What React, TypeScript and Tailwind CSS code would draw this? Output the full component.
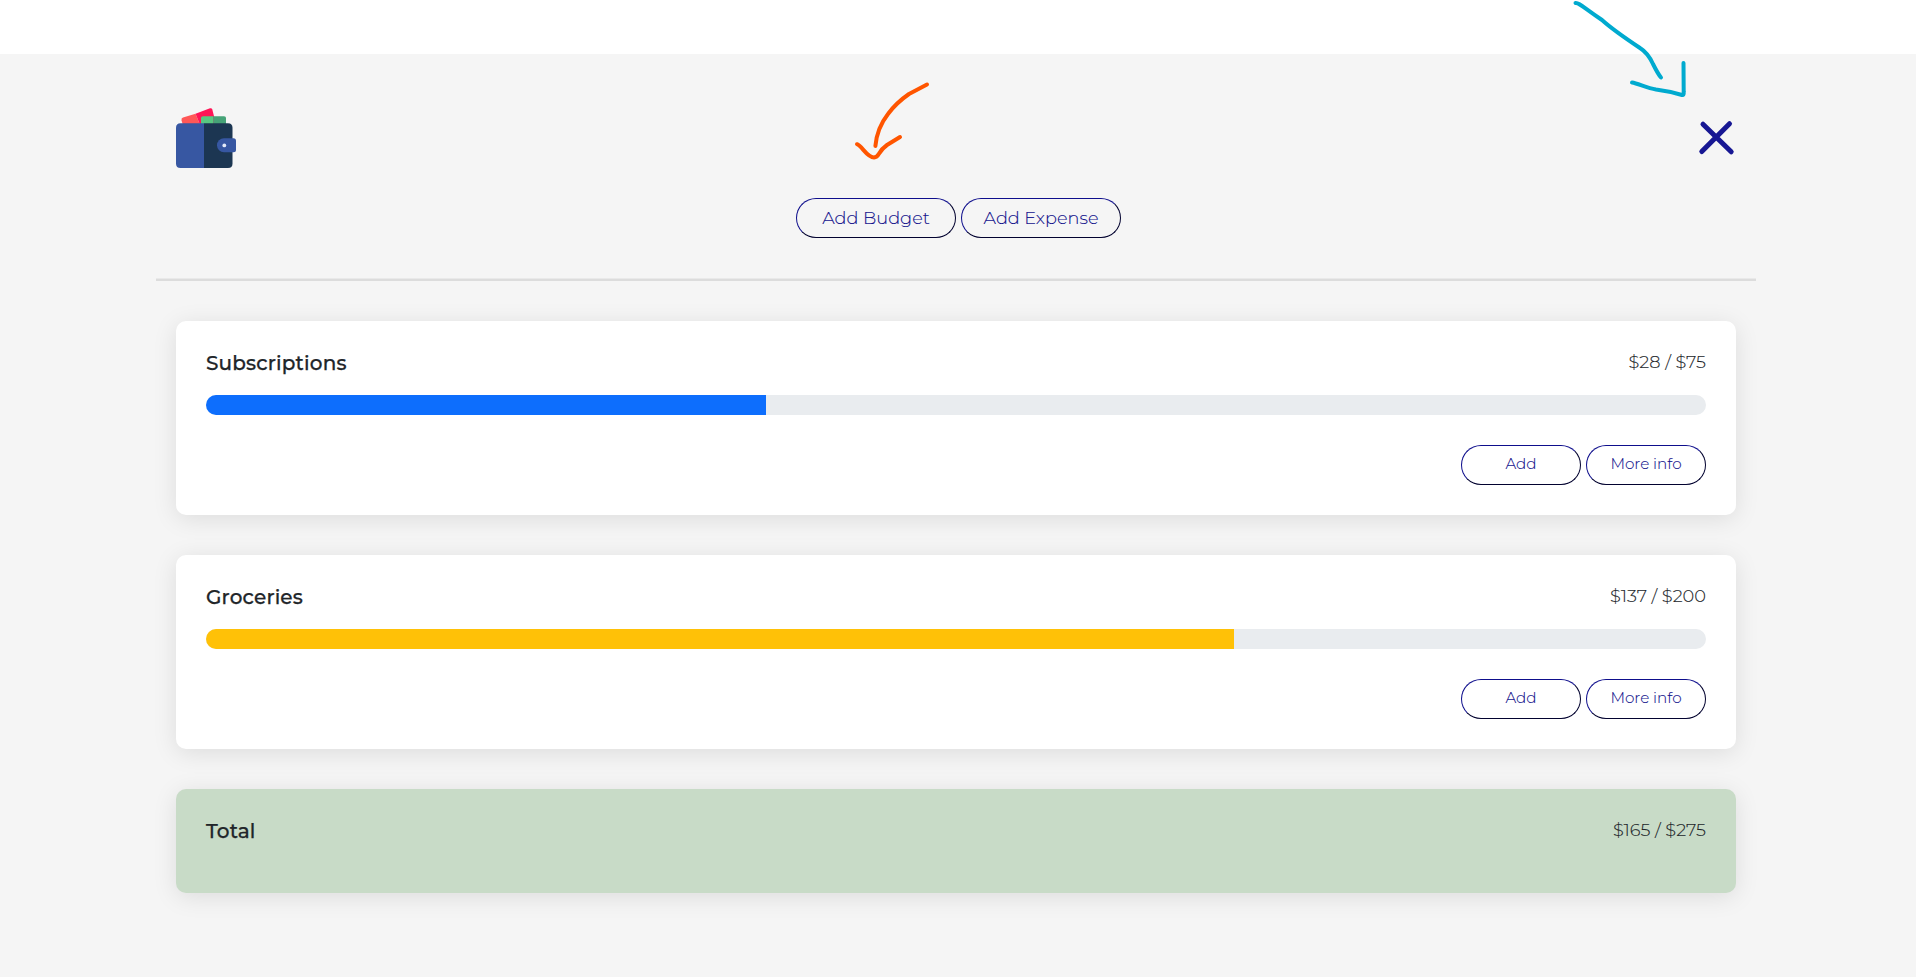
import type { ReactNode } from "react";

type Budget = { name: string; amount: string; percent: number; bar: string };

const budgets: Budget[] = [
  { name: "Subscriptions", amount: "$28 / $75", percent: 37.333, bar: "bg-[#0d6efd]" },
  { name: "Groceries", amount: "$137 / $200", percent: 68.5, bar: "bg-[#ffc107]" },
];

const cardShadow = "shadow-[0_4px_25px_rgba(0,0,0,0.1)]";

function PillButton({ children, className }: { children: ReactNode; className: string }) {
  return (
    <button
      className={`flex h-10 items-center justify-center rounded-[20px] border border-t-[#0e0e8c] border-l-[#0e0e8c] border-r-[#02022f] border-b-[#02022f] font-light text-[#12128c] [-webkit-text-stroke:0.1px_#12128c] ${className}`}
    >
      {children}
    </button>
  );
}

function CardHeading({ name, amount }: Pick<Budget, "name" | "amount">) {
  return (
    <div className="flex h-6 justify-between whitespace-nowrap text-[#212529]">
      <h2 className="text-[20px] leading-6 font-medium tracking-[0.16px] [-webkit-text-stroke:0.25px_#212529]">{name}</h2>
      <span className="text-[17.8px] leading-[22px] font-light [-webkit-text-stroke:0.1px_#212529]">{amount}</span>
    </div>
  );
}

function BudgetCard({ budget }: { budget: Budget }) {
  return (
    <section className={`h-[194px] rounded-[10px] bg-white p-[30px] ${cardShadow}`}>
      <CardHeading name={budget.name} amount={budget.amount} />
      <div className="mt-5 h-5 overflow-hidden rounded-[10px] bg-[#e9ecef]">
        <div className={`h-full ${budget.bar}`} style={{ width: `${budget.percent}%` }} />
      </div>
      <div className="mt-[30px] flex justify-end gap-[5px]">
        <PillButton className="w-[120px] pb-0.5 text-[15.2px]">Add</PillButton>
        <PillButton className="w-[120px] pb-0.5 text-[15.2px]">More info</PillButton>
      </div>
    </section>
  );
}

function WalletLogo() {
  return (
    <svg className="size-[60px]" viewBox="0 0 60 60">
      <path d="M5.5 12.5 Q5 10.3 7 9.6 L19.5 5.8 L24.5 18 H7.3Z" fill="#ff5757" />
      <path d="M19.5 5.8 L34 .3 Q35.7-.2 36.3 1.4 L40.5 18 H24.5Z" fill="#ff1556" />
      <path d="M25 10 Q25 8.2 27 8.2 H37.2 V18 H25Z" fill="#59c881" />
      <path d="M37.2 8.2 H48 Q50 8.2 50 10 V18 H37.2Z" fill="#46a377" />
      <path d="M28 15.2 H4.5 Q0 15.2 0 19.7 V55.5 Q0 60 4.5 60 H28Z" fill="#3757a2" />
      <path d="M28 15.2 H52 Q56.5 15.2 56.5 19.7 V55.5 Q56.5 60 52 60 H28Z" fill="#1c3652" />
      <path d="M48 30.3 H57.5 Q60 30.3 60 32.8 V41.8 Q60 44.3 57.5 44.3 H48 A7 7 0 0 1 48 30.3Z" fill="#3757a2" />
      <circle cx="48.3" cy="37.4" r="1.9" fill="#e3eaf8" />
    </svg>
  );
}

export default function App() {
  return (
    <div className="relative h-[977px] w-full overflow-hidden bg-white pt-[54px] font-['Montserrat','Inter',sans-serif]">
      <main className="h-full bg-[#f5f5f5] pl-[156px] pr-40">
        <header className="flex h-[144px] items-start justify-between px-5 pt-[54px]">
          <WalletLogo />
          <button aria-label="Close" className="mt-[11px]">
            <svg className="h-[38px] w-[38px]" viewBox="0 0 38 38" fill="none" stroke="#171793" strokeWidth="5" strokeLinecap="round">
              <path d="M5 5.2 33.2 32.8M31.5 4.7 3.8 32.6" />
            </svg>
          </button>
        </header>
        <nav className="ml-[5px] flex justify-center gap-[5px]">
          <PillButton className="w-40 text-[17.7px]">Add Budget</PillButton>
          <PillButton className="w-40 text-[17.7px]">Add Expense</PillButton>
        </nav>
        <hr className="mt-10 h-[3px] border-0 border-t border-t-[#e9e9e9] bg-[#dcdcdc]" />
        <div className="flex flex-col gap-10 px-5 pt-10">
          {budgets.map((budget) => (
            <BudgetCard key={budget.name} budget={budget} />
          ))}
          <section className={`h-[104px] rounded-[10px] bg-[#c8dbc7] p-[30px] ${cardShadow}`}>
            <CardHeading name="Total" amount="$165 / $275" />
          </section>
        </div>
      </main>
      <svg className="pointer-events-none absolute top-[70px] left-[840px] h-[100px] w-[100px]" viewBox="840 70 100 100" fill="none" stroke="#ff5500" strokeWidth="4" strokeLinecap="round" strokeLinejoin="round">
        <path d="M927 84.5 909 94Q896 103 888 114Q877 128 875.4 146" />
        <path d="M857 144.2C862 146 867 157.5 874 157.5C880 157 877 152 887 145L900 137" />
      </svg>
      <svg className="pointer-events-none absolute top-0 left-[1560px] h-[110px] w-[140px]" viewBox="1560 0 140 110" fill="none" stroke="#00aacf" strokeWidth="4" strokeLinecap="round" strokeLinejoin="round">
        <path d="M1575.5 3C1579 2.5 1584 8 1602 20Q1613 30 1640 48Q1648 53 1653 64Q1658 74 1661 77.5" />
        <path d="M1632 82.5C1638 83.5 1647 88 1656 89.5Q1668 91 1682 95Q1684 95.5 1683.7 92L1683.5 63" />
      </svg>
    </div>
  );
}
